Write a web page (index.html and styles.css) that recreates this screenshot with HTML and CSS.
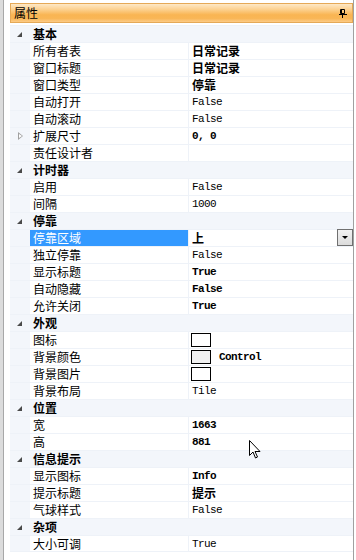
FILE: index.html
```html
<!DOCTYPE html>
<html>
<head>
<meta charset="utf-8" />
<title>属性</title>
<link rel="stylesheet" href="styles.css">
</head>
<body>
<div class="screen">
  <div class="edge"></div>
  <div class="panel">
    <div class="caption">
      <span>属性</span>
      <svg class="pin" width="8" height="9" viewBox="0 0 8 9"><path d="M1.5 0.5h4v4h-4z M2.5 0.5v4" fill="none" stroke="#000"/><path d="M0 5.5h8 M3.5 5.5v3.5" stroke="#000"/></svg>
    </div>
    <div class="grid">
      <div class="row cat"><span class="gutter"><i class="tri"></i></span><span class="name">基本</span></div>
      <div class="row"><span class="gutter"></span><span class="name">所有者表</span><span class="val cn b">日常记录</span></div>
      <div class="row"><span class="gutter"></span><span class="name">窗口标题</span><span class="val cn b">日常记录</span></div>
      <div class="row"><span class="gutter"></span><span class="name">窗口类型</span><span class="val cn b">停靠</span></div>
      <div class="row"><span class="gutter"></span><span class="name">自动打开</span><span class="val">False</span></div>
      <div class="row"><span class="gutter"></span><span class="name">自动滚动</span><span class="val">False</span></div>
      <div class="row"><span class="gutter"><i class="expand"></i></span><span class="name">扩展尺寸</span><span class="val b">0, 0</span></div>
      <div class="row"><span class="gutter"></span><span class="name">责任设计者</span><span class="val"></span></div>
      <div class="row cat"><span class="gutter"><i class="tri"></i></span><span class="name">计时器</span></div>
      <div class="row"><span class="gutter"></span><span class="name">启用</span><span class="val">False</span></div>
      <div class="row"><span class="gutter"></span><span class="name">间隔</span><span class="val">1000</span></div>
      <div class="row cat"><span class="gutter"><i class="tri"></i></span><span class="name">停靠</span></div>
      <div class="row selected"><span class="gutter"></span><span class="name">停靠区域</span><span class="val cn b">上<a class="drop" href="#"></a></span></div>
      <div class="row"><span class="gutter"></span><span class="name">独立停靠</span><span class="val">False</span></div>
      <div class="row"><span class="gutter"></span><span class="name">显示标题</span><span class="val b">True</span></div>
      <div class="row"><span class="gutter"></span><span class="name">自动隐藏</span><span class="val b">False</span></div>
      <div class="row"><span class="gutter"></span><span class="name">允许关闭</span><span class="val b">True</span></div>
      <div class="row cat"><span class="gutter"><i class="tri"></i></span><span class="name">外观</span></div>
      <div class="row"><span class="gutter"></span><span class="name">图标</span><span class="val"><i class="swatch"></i></span></div>
      <div class="row"><span class="gutter"></span><span class="name">背景颜色</span><span class="val b"><i class="swatch gray"></i>Control</span></div>
      <div class="row"><span class="gutter"></span><span class="name">背景图片</span><span class="val"><i class="swatch"></i></span></div>
      <div class="row"><span class="gutter"></span><span class="name">背景布局</span><span class="val">Tile</span></div>
      <div class="row cat"><span class="gutter"><i class="tri"></i></span><span class="name">位置</span></div>
      <div class="row"><span class="gutter"></span><span class="name">宽</span><span class="val b">1663</span></div>
      <div class="row"><span class="gutter"></span><span class="name">高</span><span class="val b">881</span></div>
      <div class="row cat"><span class="gutter"><i class="tri"></i></span><span class="name">信息提示</span></div>
      <div class="row"><span class="gutter"></span><span class="name">显示图标</span><span class="val b">Info</span></div>
      <div class="row"><span class="gutter"></span><span class="name">提示标题</span><span class="val cn b">提示</span></div>
      <div class="row"><span class="gutter"></span><span class="name">气球样式</span><span class="val">False</span></div>
      <div class="row cat"><span class="gutter"><i class="tri"></i></span><span class="name">杂项</span></div>
      <div class="row last"><span class="gutter"></span><span class="name">大小可调</span><span class="val">True</span></div>
    </div>
  </div>
</div>
<svg class="cursor" width="12" height="19" viewBox="0 0 12 19"><path d="M0.5 0.5v15l3.5-3.5 2.5 6 2-1-2.5-5.5h5z" fill="#fff" stroke="#000"/></svg>
</body>
</html>
```

FILE: styles.css
```css
* {
  margin: 0;
  padding: 0;
  box-sizing: border-box;
}
body {
  width: 356px;
  height: 560px;
  overflow: hidden;
  background: #fff;
  color: #000;
  font-family: "Noto Sans CJK SC", sans-serif;
  font-size: 12px;
  position: relative;
}
.screen {
  display: flex;
  height: 560px;
}
.edge {
  width: 10px;
  background: linear-gradient(to right, #dcdcdc 0, #dcdcdc 3px, #a8a8a8 3px, #a8a8a8 4px, #fff 4px);
}
.panel {
  width: 344px;
  padding-top: 3px;
  border-right: 1px solid #a0a0a0;
}
.caption {
  height: 20px;
  display: flex;
  align-items: center;
  justify-content: space-between;
  padding: 0 5px 0 3px;
  border: 1px solid #e5a957;
  background: linear-gradient(to bottom, #fee8c6 0%, #fcd190 30%, #f9b553 60%, #f9b656 80%, #fccb87 100%);
  line-height: 18px;
}
.pin {
  display: block;
}
.grid {
  margin-top: 2px;
}
.row {
  display: flex;
  height: 17px;
  border-top: 1px solid #eef2f8;
  line-height: 16px;
  white-space: nowrap;
}
.row.last {
  border-bottom: 1px solid #eef2f8;
}
.gutter {
  width: 20px;
  flex: none;
  background: #f3f6fb;
  position: relative;
}
.name {
  width: 159px;
  flex: none;
  padding-left: 3px;
  border-right: 1px solid #eef2f8;
}
.val {
  flex: 1;
  display: flex;
  align-items: center;
  padding-left: 3px;
  font-family: "Liberation Mono", monospace;
  font-size: 11px;
  letter-spacing: -0.6px;
}
.val.cn {
  font-family: "Noto Sans CJK SC", sans-serif;
  font-size: 12px;
  letter-spacing: 0;
}
.b {
  font-weight: bold;
}
.cat {
  background: #f3f6fb;
  font-weight: bold;
}
.cat .name {
  border-right: 0 none;
}
.selected .name {
  background: #3399ff;
  color: #fff;
}
.tri {
  position: absolute;
  left: 7px;
  top: 6px;
  width: 0;
  height: 0;
  border-left: 5px solid transparent;
  border-bottom: 5px solid #4a4a4a;
}
.expand {
  position: absolute;
  left: 8px;
  top: 4px;
  width: 0;
  height: 0;
  border-top: 4px solid transparent;
  border-bottom: 4px solid transparent;
  border-left: 5px solid #a0a0a0;
}
.expand::after {
  content: '';
  position: absolute;
  left: -4px;
  top: -2px;
  border-top: 2px solid transparent;
  border-bottom: 2px solid transparent;
  border-left: 3px solid #fff;
}
.swatch {
  display: inline-block;
  width: 20px;
  height: 14px;
  margin-left: -1px;
  border: 1px solid #000;
  background: #fff;
}
.swatch.gray {
  background: #f0f0f0;
  margin-right: 8px;
}
.drop {
  margin-left: auto;
  margin-top: -1px;
  width: 16px;
  height: 17px;
  border: 1px solid #707070;
  background: linear-gradient(to bottom, #f2f2f2, #dcdcdc);
  position: relative;
  align-self: flex-start;
}
.drop::after {
  content: '';
  position: absolute;
  left: 4px;
  top: 6px;
  border-left: 3px solid transparent;
  border-right: 3px solid transparent;
  border-top: 3px solid #000;
}
.cursor {
  position: absolute;
  left: 249px;
  top: 440px;
}
```
